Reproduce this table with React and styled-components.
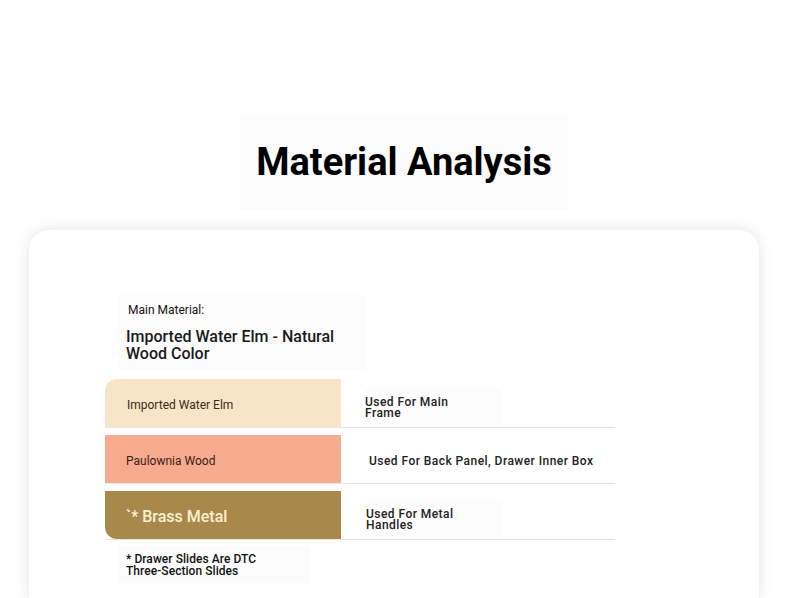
import React from 'react';
import styled, {createGlobalStyle} from "styled-components";

const GlobalStyle = createGlobalStyle`
  body {
    margin: 0;
    background: white;
    font-family: Roboto, "Liberation Sans", sans-serif;
    color: #111;
  }
`;

const Page = styled.div`
  display: flex;
  flex-direction: column;
  align-items: center;
  padding-top: 115px;
  height: 598px;
  overflow: hidden;
  box-sizing: border-box;
`;

const TitleBox = styled.div`
  background: #fcfcfc;
  padding: 25px 16px 26px;
  margin-left: 18px;
`;

const Title = styled.h1`
  margin: 0;
  font-size: 38px;
  font-weight: 700;
  line-height: 44px;
  color: #000;
`;

const Card = styled.div`
  align-self: stretch;
  margin: 20px 31px 0 29px;
  flex: 1;
  background: white;
  border-radius: 20px 20px 0 0;
  box-shadow: 0 0 14px rgba(0, 0, 0, 0.12);
  padding: 65px 0 0 76px;
`;

const MainBlock = styled.div`
  width: 240px;
  margin-left: 13px;
  padding: 8px 0 8px 8px;
  background: #fcfcfc;
  margin-bottom: 9px;
`;

const MainLabel = styled.div`
  font-size: 12px;
  line-height: 14px;
  color: #111;
  margin-left: 2px;
  margin-bottom: 11px;
`;

const MainValue = styled.div`
  font-size: 16px;
  line-height: 17px;
  font-weight: 500;
  color: #1a1a1a;
`;

const Table = styled.div`
  width: 510px;
  display: flex;
  flex-direction: column;
  gap: 7px;
`;

const Row = styled.div`
  display: grid;
  grid-template-columns: 236px 1fr;
  height: 48px;
  border-bottom: 1px solid #e6e6e6;
`;

const MaterialCell = styled.div`
  display: flex;
  align-items: center;
  background: ${props => props.bg};
  color: ${props => props.fg};
  font-size: ${props => props.big ? "16px" : "12px"};
  font-weight: ${props => props.big ? 500 : 400};
  padding: 3px 0 0 ${props => props.pad}px;
  border-radius: ${props => props.radius};
`;

const UseCell = styled.div`
  display: flex;
  align-items: center;
  padding: ${props => props.narrow ? 7 : 4}px 0 0 ${props => props.pad}px;
`;

const UseText = styled.div`
  max-width: ${props => props.narrow ? "92px" : "none"};
  background: ${props => props.narrow ? "#fcfcfc" : "transparent"};
  padding: ${props => props.narrow ? "8px 44px 6px 0" : "0"};
  font-size: 12px;
  line-height: 11px;
  letter-spacing: 0.45px;
  font-weight: 500;
  color: #222;
`;

const Note = styled.div`
  margin: 6px 0 0 13px;
  width: 184px;
  padding: 7px 0 6px 8px;
  background: #fcfcfc;
`;

const NoteText = styled.div`
  max-width: 135px;
  font-size: 12px;
  line-height: 12px;
  letter-spacing: 0.05px;
  font-weight: 500;
  color: #111;
`;

const rows = [
    {name: "Imported Water Elm", bg: "#f8e4c6", fg: "#3b2b1c", pad: 22, radius: "12px 0 0 0", use: "Used For Main Frame", narrow: true, usePad: 24},
    {name: "Paulownia Wood", bg: "#f6ab8f", fg: "#3a1c12", pad: 21, radius: "0", use: "Used For Back Panel, Drawer Inner Box", narrow: false, usePad: 28},
    {name: "`* Brass Metal", bg: "#a8894b", fg: "#fdf0d6", pad: 21, radius: "0 0 0 12px", use: "Used For Metal Handles", narrow: true, usePad: 25, big: true},
];

export default function App() {
    return (
        <>
            <GlobalStyle/>
            <Page>
                <TitleBox>
                    <Title>Material Analysis</Title>
                </TitleBox>
                <Card>
                    <MainBlock>
                        <MainLabel>Main Material:</MainLabel>
                        <MainValue>Imported Water Elm - Natural Wood Color</MainValue>
                    </MainBlock>
                    <Table>
                        {rows.map(row => (
                            <Row key={row.name}>
                                <MaterialCell bg={row.bg} fg={row.fg} pad={row.pad} radius={row.radius} big={row.big}>
                                    {row.name}
                                </MaterialCell>
                                <UseCell pad={row.usePad} narrow={row.narrow}>
                                    <UseText narrow={row.narrow}>{row.use}</UseText>
                                </UseCell>
                            </Row>
                        ))}
                    </Table>
                    <Note>
                        <NoteText>* Drawer Slides Are DTC Three-Section Slides</NoteText>
                    </Note>
                </Card>
            </Page>
        </>
    );
}
